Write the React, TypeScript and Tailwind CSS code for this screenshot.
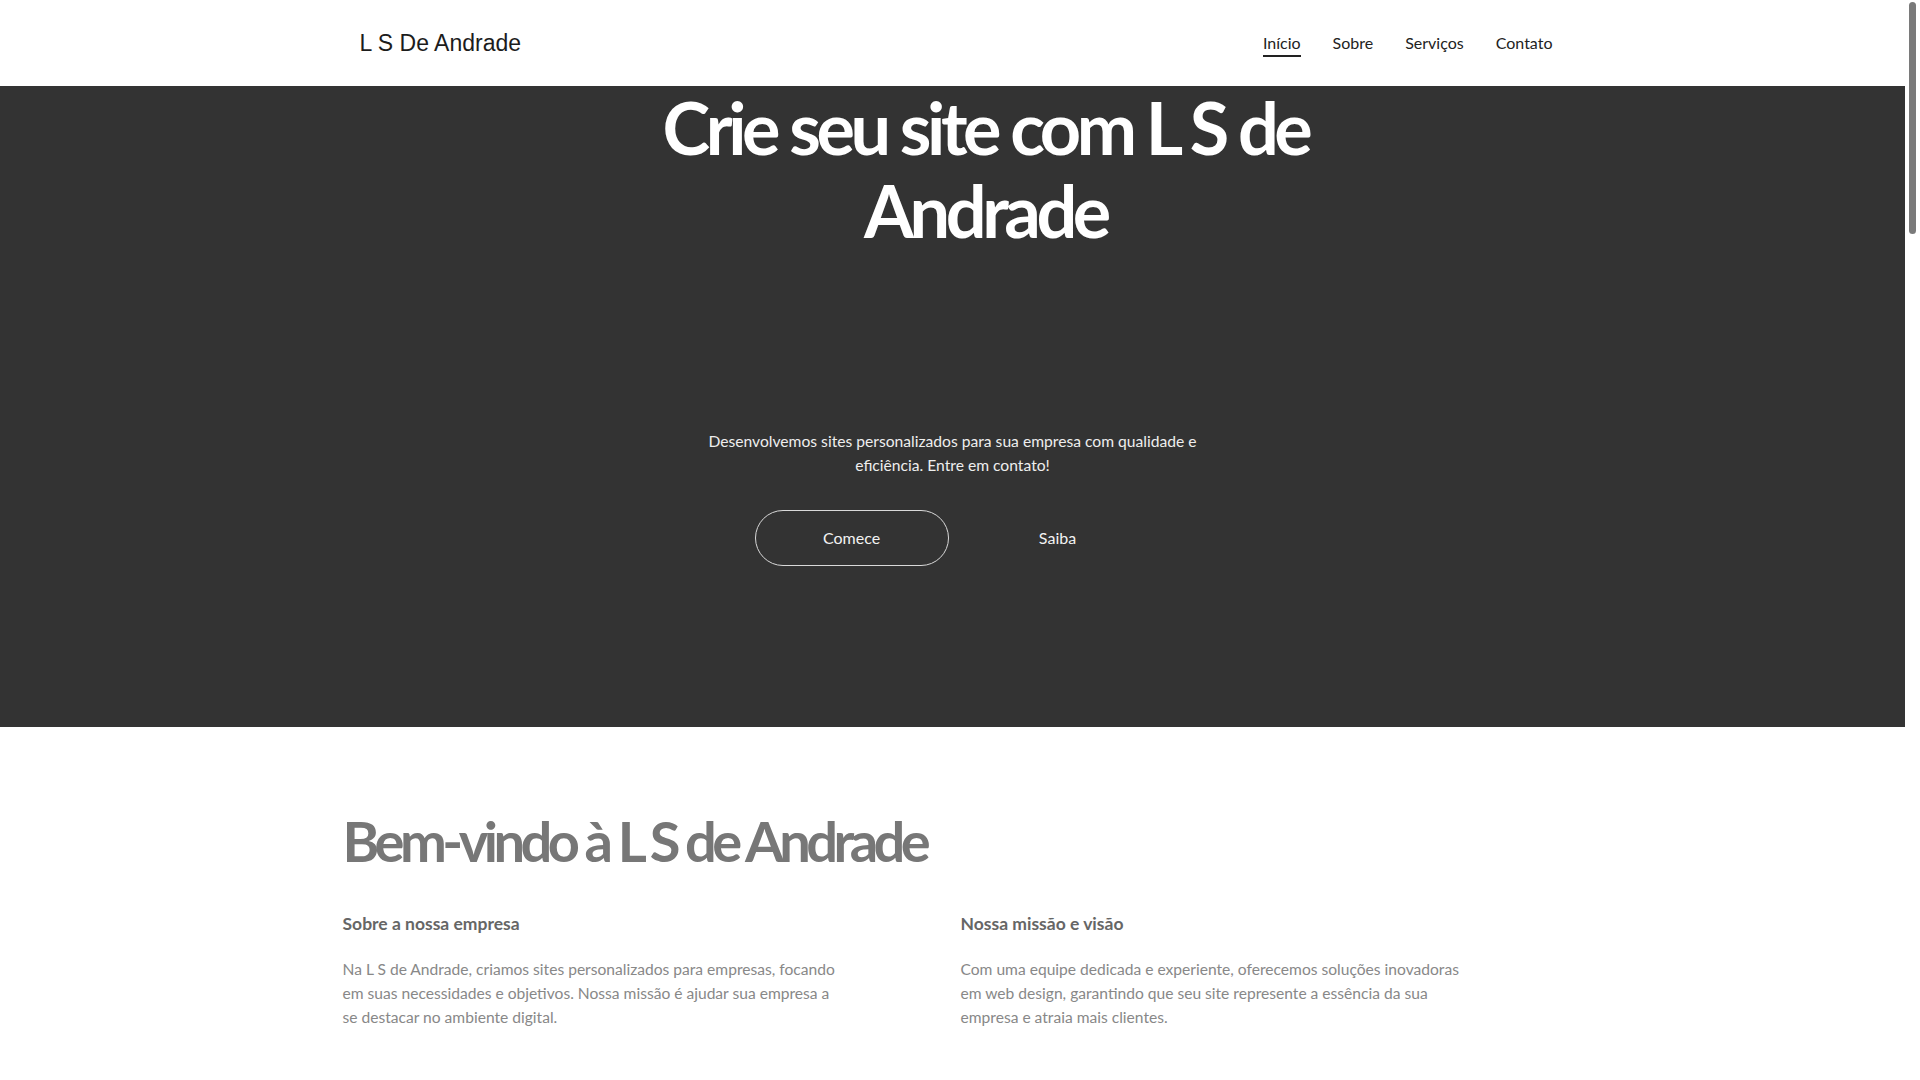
import type { ReactNode } from "react";

const navLinks = ["Início", "Sobre", "Serviços", "Contato"];

function Header() {
  return (
    <header className="h-[86px] bg-white">
      <div className="mx-auto flex h-full max-w-[1200px] items-center justify-between pl-[7px]">
        <a href="#" className="font-['Liberation_Sans',Arial,sans-serif] text-[23px] leading-none text-[#1c1c1c]">
          L S De Andrade
        </a>
        <nav className="flex items-center gap-8 text-base leading-6 text-[#222]">
          {navLinks.map((label, i) => (
            <a key={label} href="#" className="relative">
              {label}
              {i === 0 && <span className="absolute inset-x-0 -bottom-[2px] h-[2px] bg-[#222]" />}
            </a>
          ))}
        </nav>
      </div>
    </header>
  );
}

function HeroButton({ children, outlined }: { children: ReactNode; outlined?: boolean }) {
  return (
    <a
      href="#"
      className={`flex h-[56px] w-[194px] items-center justify-center rounded-full text-base text-[#f2f2f2] ${
        outlined ? "border border-[#d9d9d9]" : ""
      }`}
    >
      {children}
    </a>
  );
}

function Hero() {
  return (
    <section className="flex h-[641px] flex-col items-center bg-[#333333] text-center">
      <div className="w-full pl-[66px]">
        <h1 className="mx-auto max-w-[700px] text-[72px] font-bold leading-[83px] tracking-[-4.4px] text-white">
          Crie seu site com L S de Andrade
        </h1>
      </div>
      <p className="mt-[177px] max-w-[500px] text-[15.65px] leading-6 text-[#eeeeee]">
        Desenvolvemos sites personalizados para sua empresa com qualidade e eficiência. Entre em contato!
      </p>
      <div className="mt-[33px] flex gap-[12px] pl-[4px]">
        <HeroButton outlined>Comece</HeroButton>
        <HeroButton>Saiba</HeroButton>
      </div>
    </section>
  );
}

function Column({ title, text }: { title: string; text: string }) {
  return (
    <div>
      <h3 className="text-[17.5px] font-bold leading-[27px] text-[#666]">{title}</h3>
      <p className="mt-5 max-w-[500px] text-[15.6px] leading-6 text-[#888]">{text}</p>
    </div>
  );
}

function About() {
  return (
    <section className="mx-auto max-w-[1220px] pt-[80px]">
      <h2 className="text-[56px] font-bold leading-[1.2] tracking-[-4.5px] text-[#777]">
        Bem-vindo à L S de Andrade
      </h2>
      <div className="mt-[36px] grid grid-cols-2 gap-4">
        <Column
          title="Sobre a nossa empresa"
          text="Na L S de Andrade, criamos sites personalizados para empresas, focando em suas necessidades e objetivos. Nossa missão é ajudar sua empresa a se destacar no ambiente digital."
        />
        <Column
          title="Nossa missão e visão"
          text="Com uma equipe dedicada e experiente, oferecemos soluções inovadoras em web design, garantindo que seu site represente a essência da sua empresa e atraia mais clientes."
        />
      </div>
    </section>
  );
}

function Services() {
  const items = [
    ["Criação de sites", "Sites modernos, rápidos e adaptados para qualquer dispositivo."],
    ["Lojas virtuais", "Venda seus produtos online com segurança e praticidade."],
    ["Manutenção", "Atualizações e suporte contínuo para o seu site."],
  ];
  return (
    <section className="mx-auto max-w-[1220px] pt-[160px]">
      <h2 className="text-[48px] font-bold leading-[1.2] text-[#777]">Serviços</h2>
      <div className="mt-10 grid grid-cols-3 gap-8">
        {items.map(([title, text]) => (
          <div key={title} className="min-h-[600px]">
            <h3 className="text-lg font-bold text-[#666]">{title}</h3>
            <p className="mt-4 text-base leading-6 text-[#888]">{text}</p>
          </div>
        ))}
      </div>
    </section>
  );
}

function Contact() {
  return (
    <section className="mx-auto min-h-[2200px] max-w-[1220px] pt-[160px]">
      <h2 className="text-[48px] font-bold leading-[1.2] text-[#777]">Contato</h2>
      <p className="mt-6 text-base leading-6 text-[#888]">Entre em contato e solicite seu orçamento.</p>
    </section>
  );
}

// the reference was captured with a classic page scrollbar on the right
function Scrollbar() {
  return (
    <aside className="w-[15px] shrink-0 bg-white">
      <div className="ml-[4px] mt-[2px] h-[232px] w-[7px] rounded-full bg-[#7a7a7a]" />
    </aside>
  );
}

export default function App() {
  return (
    <div className="flex min-h-screen bg-white font-['Lato','Noto_Sans',sans-serif]">
      <main className="w-[1905px] shrink-0">
        <Header />
        <Hero />
        <About />
        <Services />
        <Contact />
        <footer className="bg-[#333333] py-10 text-center text-sm text-[#ccc]">© L S De Andrade</footer>
      </main>
      <Scrollbar />
    </div>
  );
}
